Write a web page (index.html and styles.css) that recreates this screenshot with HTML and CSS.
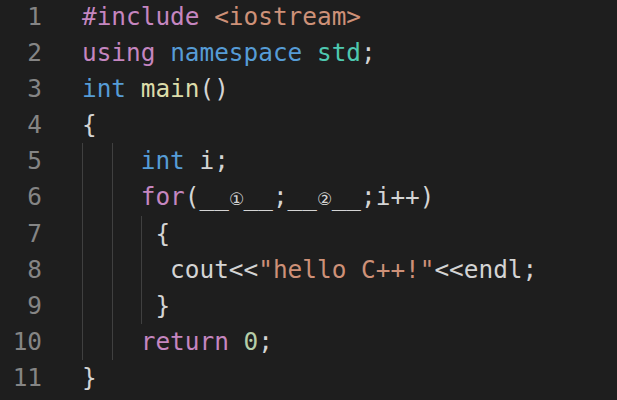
FILE: index.html
```html
<!DOCTYPE html>
<html>
<head>
<meta charset="utf-8">
<link rel="stylesheet" href="styles.css">
</head>
<body>
<div class="editor">
  <div class="gutter">
    <div class="ln">1</div>
    <div class="ln">2</div>
    <div class="ln">3</div>
    <div class="ln">4</div>
    <div class="ln">5</div>
    <div class="ln">6</div>
    <div class="ln">7</div>
    <div class="ln">8</div>
    <div class="ln">9</div>
    <div class="ln">10</div>
    <div class="ln">11</div>
  </div>
  <div class="code">
    <div class="line"><span class="kw">#include</span> <span class="str">&lt;iostream&gt;</span></div>
    <div class="line"><span class="kw">using</span> <span class="st">namespace</span> <span class="ty">std</span>;</div>
    <div class="line"><span class="st">int</span> <span class="fn">main</span>()</div>
    <div class="line">{</div>
    <div class="group g1">
      <div class="line">    <span class="st">int</span> i;</div>
      <div class="line">    <span class="kw">for</span>(__<span class="circ">①</span>__;__<span class="circ">②</span>__;i++)</div>
      <div class="group g2">
        <div class="line">     {</div>
        <div class="line">      cout&lt;&lt;<span class="str">"hello C++!"</span>&lt;&lt;endl;</div>
        <div class="line">     }</div>
      </div>
      <div class="line">    <span class="kw">return</span> <span class="num">0</span>;</div>
    </div>
    <div class="line">}</div>
  </div>
</div>
</body>
</html>
```
FILE: styles.css
```css
html, body {
  margin: 0;
  padding: 0;
  background: #1e1e1e;
}
.editor {
  display: grid;
  grid-template-columns: 42px auto;
  column-gap: 40px;
  margin-top: -1px;
  font-family: "DejaVu Sans Mono", "Liberation Mono", monospace;
  font-size: 24.4px;
  line-height: 36.1px;
  color: #d4d4d4;
}
.ln {
  text-align: right;
  color: #858585;
}
.line {
  white-space: pre;
}
.group {
  background-repeat: no-repeat;
}
.g1 {
  background-image: linear-gradient(#404040, #404040), linear-gradient(#404040, #404040);
  background-size: 1px 100%, 1px 100%;
  background-position: 0 0, 30px 0;
}
.g2 {
  background-image: linear-gradient(#404040, #404040);
  background-size: 1px 100%;
  background-position: 59px 0;
}
.kw { color: #c586c0; }
.str { color: #ce9178; }
.st { color: #569cd6; }
.ty { color: #4ec9b0; }
.fn { color: #dcdcaa; }
.num { color: #b5cea8; }
.circ {
  display: inline-block;
  width: 14.7px;
  font-family: "DejaVu Sans", "Noto Sans CJK SC", sans-serif;
  font-size: 17px;
  line-height: 20px;
  text-align: center;
}
```
